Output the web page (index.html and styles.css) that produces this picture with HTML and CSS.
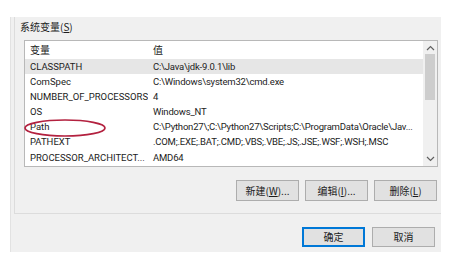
FILE: index.html
```html
<!DOCTYPE html>
<html lang="zh-CN">
<head>
<meta charset="utf-8">
<link rel="stylesheet" href="styles.css">
</head>
<body>
<div class="dialog">
  <div class="group">
    <div class="group-title">系统变量(<u>S</u>)</div>
    <div class="listbox">
      <div class="list-main">
        <div class="row head"><span class="c1">变量</span><span class="c2">值</span></div>
        <div class="row sel"><span class="c1">CLASSPATH</span><span class="c2">C:\Java\jdk-9.0.1\lib</span></div>
        <div class="row"><span class="c1">ComSpec</span><span class="c2">C:\Windows\system32\cmd.exe</span></div>
        <div class="row"><span class="c1">NUMBER_OF_PROCESSORS</span><span class="c2">4</span></div>
        <div class="row"><span class="c1">OS</span><span class="c2">Windows_NT</span></div>
        <div class="row"><span class="c1">Path</span><span class="c2">C:\Python27\;C:\Python27\Scripts;C:\ProgramData\Oracle\Jav...</span></div>
        <div class="row"><span class="c1">PATHEXT</span><span class="c2">.COM;.EXE;.BAT;.CMD;.VBS;.VBE;.JS;.JSE;.WSF;.WSH;.MSC</span></div>
        <div class="row"><span class="c1">PROCESSOR_ARCHITECT...</span><span class="c2">AMD64</span></div>
      </div>
      <div class="scrollbar">
        <svg class="arrow" width="9" height="6" viewBox="0 0 9 6"><path d="M1 5 L4.5 1.5 L8 5" fill="none" stroke="#606060" stroke-width="1.2"/></svg>
        <div class="thumb-track"><div class="thumb"></div></div>
        <svg class="arrow" width="9" height="6" viewBox="0 0 9 6"><path d="M1 1 L4.5 4.5 L8 1" fill="none" stroke="#606060" stroke-width="1.2"/></svg>
      </div>
    </div>
    <div class="btn-row">
      <button class="btn">新建(<u>W</u>)...</button>
      <button class="btn">编辑(<u>I</u>)...</button>
      <button class="btn">删除(<u>L</u>)</button>
    </div>
  </div>
  <div class="footer">
    <button class="btn ok">确定</button>
    <button class="btn">取消</button>
  </div>
  <svg class="mark" width="84" height="22" viewBox="0 0 84 22"><ellipse cx="42" cy="11" rx="40" ry="8" fill="none" stroke="#b3213f" stroke-width="1.7"/></svg>
</div>
</body>
</html>
```
FILE: styles.css
```css
* { box-sizing: border-box; }
html, body { margin: 0; padding: 0; background: #ffffff; }
body {
  font-family: "Roboto", "Noto Sans CJK SC", sans-serif;
  font-size: 9.5px;
  color: #1c1c1c;
}
.dialog {
  position: relative;
  margin: 17px 0 0 10px;
  width: 431px;
  height: 235px;
  background: #f0f0f0;
  border-left: 1px solid #e2e2e2;
  display: flex;
  flex-direction: column;
}
.group {
  margin-left: 3px;
  height: 197px;
  border-left: 1px solid #dcdcdc;
  border-bottom: 1px solid #dcdcdc;
  padding: 3px 0 0 5px;
}
.group-title {
  height: 20px;
  line-height: 14px;
  font-family: "Noto Sans CJK SC", sans-serif;
  font-size: 10px;
}
.listbox {
  width: 414px;
  height: 127px;
  margin-left: 4px;
  background: #ffffff;
  border: 1px solid #b8b8b8;
  display: flex;
}
.list-main { flex: 1; overflow: hidden; }
.row {
  display: flex;
  height: 15.2px;
  line-height: 15px;
  white-space: nowrap;
}
.row.head { height: 17.5px; line-height: 18px; font-family: "Noto Sans CJK SC", sans-serif; font-size: 10px; }
.row.sel { background: #e6e6e6; }
.c1 { width: 123px; flex: none; padding-left: 5px; overflow: hidden; }
.c2 { flex: 1; padding-left: 5px; overflow: hidden; letter-spacing: -0.2px; }
.scrollbar {
  width: 14px;
  background: #f0f0f0;
  display: flex;
  flex-direction: column;
  align-items: center;
  padding: 4px 0;
}
.arrow { display: block; flex: none; }
.thumb-track { flex: 1; width: 100%; padding: 3px 2px 0; }
.thumb { width: 100%; height: 46px; background: #cdcdcd; }
.btn-row {
  display: flex;
  justify-content: flex-end;
  gap: 6px;
  padding: 13px 4px 0 0;
}
.btn {
  font-family: "Noto Sans CJK SC", sans-serif;
  font-size: 10px;
  color: #1c1c1c;
  background: #e1e1e1;
  border: 1px solid #adadad;
  height: 21px;
  width: 63px;
  padding: 0;
  margin: 0;
  line-height: 19px;
}
.footer {
  flex: 1;
  display: flex;
  justify-content: flex-end;
  gap: 7px;
  padding: 13px 6px 0 0;
}
.footer .btn { height: 20px; line-height: 18px; }
.btn.ok { border: 1px solid #0078d7; box-shadow: inset 0 0 0 1px #0078d7; }
.mark { position: absolute; left: 12px; top: 100px; }
```
